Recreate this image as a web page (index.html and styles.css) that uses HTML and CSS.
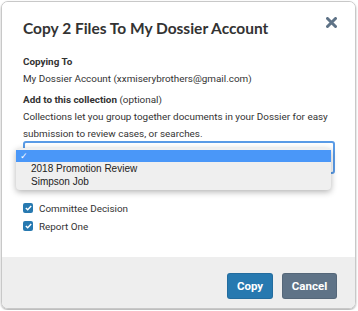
FILE: index.html
```html
<!DOCTYPE html>
<html lang="en">
<head>
  <meta charset="UTF-8">
  <title>Copy Files</title>
  <link rel="stylesheet" href="styles.css">
</head>
<body>

  <div class="modal">
    <div class="modal-body">
      <div class="modal-head">
        <h1>Copy 2 Files To My Dossier Account</h1>
        <button class="close-btn" aria-label="Close">
          <svg width="11" height="11" viewBox="0 0 11 11"><path d="M1.5 1.5 L9.5 9.5 M9.5 1.5 L1.5 9.5" stroke="#5f7387" stroke-width="3" stroke-linecap="round"/></svg>
        </button>
      </div>

      <!-- Destination -->
      <div class="field">
        <div class="label">Copying To</div>
        <p>My Dossier Account (xxmiserybrothers@gmail.com)</p>
      </div>

      <!-- Collection select -->
      <div class="field">
        <div class="label">Add to this collection <span class="muted">(optional)</span></div>
        <p>Collections let you group together documents in your Dossier for easy submission to review cases, or searches.</p>
        <div class="select-wrap">
          <div class="select-box"></div>
          <ul class="select-menu">
            <li class="selected"><span class="tick">&#10003;</span></li>
            <li>2018 Promotion Review</li>
            <li>Simpson Job</li>
          </ul>
        </div>
      </div>

      <!-- Files -->
      <ul class="file-list">
        <li><span class="checkbox"><svg width="7" height="6" viewBox="0 0 7 6"><path d="M0.8 3 L2.7 4.8 L6.2 1" fill="none" stroke="#fff" stroke-width="1.4"/></svg></span>Committee Decision</li>
        <li><span class="checkbox"><svg width="7" height="6" viewBox="0 0 7 6"><path d="M0.8 3 L2.7 4.8 L6.2 1" fill="none" stroke="#fff" stroke-width="1.4"/></svg></span>Report One</li>
      </ul>
    </div>

    <div class="modal-footer">
      <button class="btn btn-primary">Copy</button>
      <button class="btn btn-secondary">Cancel</button>
    </div>
  </div>

</body>
</html>
```

FILE: styles.css
```css
:root {
  --text-color: #333;
  --primary-color: #2779b0;
  --secondary-color: #5f7387;
  --footer-color: #eeeeee;
  --focus-color: #5a9be6;
}

body {
  margin: 0;
  padding: 0;
  background: #fff;
  font-family: Roboto, "Liberation Sans", sans-serif;
  color: var(--text-color);
}

.modal {
  width: 353px;
  height: 306px;
  margin: 1px;
  border: 1px solid #c8c8c8;
  border-radius: 7px;
  box-shadow: 0 1px 2px rgba(0, 0, 0, 0.35);
  overflow: hidden;
  display: flex;
  flex-direction: column;
}

.modal-body {
  flex: 1;
  padding: 14px 20px 0 21px;
  background: #fff;
}

.modal-head {
  display: flex;
  justify-content: space-between;
  align-items: flex-start;
}

.modal-head h1 {
  margin: 0;
  font-family: Lato, "Open Sans", sans-serif;
  font-size: 15.5px;
  font-weight: bold;
  line-height: 24px;
  color: #333;
}

.close-btn {
  background: none;
  border: none;
  padding: 0;
  margin: 0 -2px 0 0;
  cursor: pointer;
  height: 11px;
}

.field {
  margin-top: 13px;
  font-size: 9.9px;
  line-height: 17px;
}

.field + .field {
  margin-top: 4px;
}

.label {
  font-weight: bold;
}

.muted {
  font-weight: normal;
}

.field p {
  margin: 0;
}

.select-wrap {
  position: relative;
  height: 33px;
  margin-top: -1px;
}

.select-box {
  height: 29px;
  border: 2px solid var(--focus-color);
  border-radius: 3px;
}

.select-menu {
  position: absolute;
  left: -7px;
  top: 7px;
  width: 315px;
  margin: 0;
  padding: 2px 0 2px;
  list-style: none;
  background: #efefef;
  border-radius: 4px;
  box-shadow: 0 2px 6px rgba(0, 0, 0, 0.3);
  font-family: "Liberation Sans", Arial, sans-serif;
  font-size: 10px;
  line-height: 13px;
}

.select-menu li {
  padding: 0 0 0 15px;
  height: 13px;
  color: #222;
}

.select-menu li.selected {
  background: #4a97f8;
  padding-left: 4px;
  height: 12px;
  line-height: 12px;
}

.tick {
  color: #fff;
  font-size: 9px;
}

.file-list {
  list-style: none;
  margin: 25px 0 0;
  padding: 0;
  font-size: 9.9px;
}

.file-list li {
  display: flex;
  align-items: center;
  height: 18px;
}

.checkbox {
  display: flex;
  align-items: center;
  justify-content: center;
  width: 10px;
  height: 10px;
  margin-right: 6px;
  background: var(--primary-color);
  border-radius: 2px;
}

.modal-footer {
  height: 51px;
  background: var(--footer-color);
  display: flex;
  justify-content: flex-end;
  align-items: flex-start;
  gap: 9px;
  padding: 16px 18px 0 0;
  box-sizing: border-box;
}

.btn {
  height: 26px;
  padding: 0 8px;
  border: 1px solid rgba(0, 0, 0, 0.1);
  border-radius: 3px;
  color: #fff;
  font-family: Roboto, "Liberation Sans", sans-serif;
  font-size: 11.5px;
  font-weight: bold;
  cursor: pointer;
}

.btn-primary {
  background: var(--primary-color);
  width: 46px;
}

.btn-secondary {
  background: var(--secondary-color);
  width: 55px;
}
```
